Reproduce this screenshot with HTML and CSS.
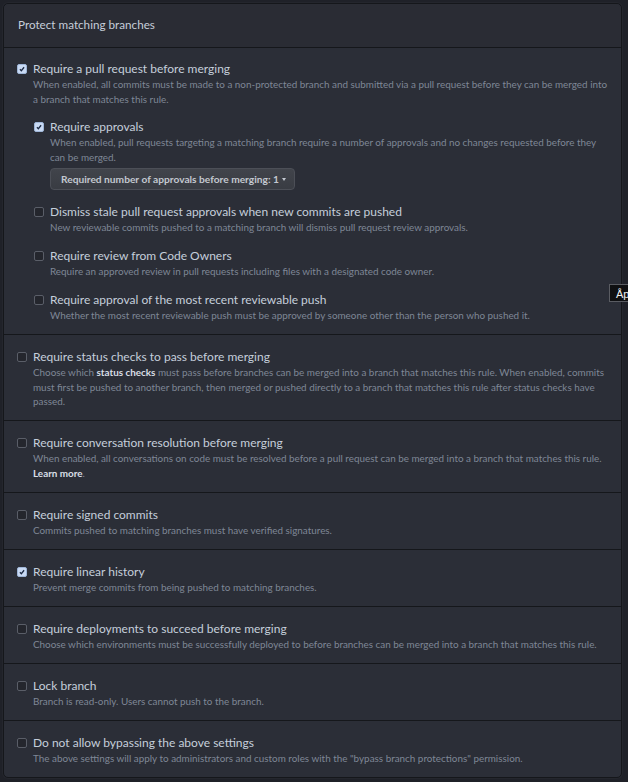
FILE: index.html
```html
<!DOCTYPE html>
<html lang="en">
<head>
<meta charset="utf-8">
<title>Protect matching branches</title>
<link rel="stylesheet" href="styles.css">
</head>
<body>
<div class="box">
  <div class="box-header">Protect matching branches</div>

  <div class="section section-first">
    <div class="opt">
      <span class="cb checked"><svg viewBox="0 0 10 10"><path d="M2.4 5.3 L4.2 7.2 L7.6 2.8" /></svg></span>
      <div class="opt-body">
        <div class="opt-title">Require a pull request before merging</div>
        <div class="opt-desc">When enabled, all commits must be made to a non-protected branch and submitted via a pull request before they can be merged into a branch that matches this rule.</div>

        <div class="sub">
          <div class="opt">
            <span class="cb checked"><svg viewBox="0 0 10 10"><path d="M2.4 5.3 L4.2 7.2 L7.6 2.8" /></svg></span>
            <div class="opt-body">
              <div class="opt-title">Require approvals</div>
              <div class="opt-desc">When enabled, pull requests targeting a matching branch require a number of approvals and no changes requested before they can be merged.</div>
              <button class="btn">Required number of approvals before merging: 1 <span class="caret"></span></button>
            </div>
          </div>
          <div class="opt">
            <span class="cb"></span>
            <div class="opt-body">
              <div class="opt-title">Dismiss stale pull request approvals when new commits are pushed</div>
              <div class="opt-desc">New reviewable commits pushed to a matching branch will dismiss pull request review approvals.</div>
            </div>
          </div>
          <div class="opt">
            <span class="cb"></span>
            <div class="opt-body">
              <div class="opt-title">Require review from Code Owners</div>
              <div class="opt-desc">Require an approved review in pull requests including files with a designated code owner.</div>
            </div>
          </div>
          <div class="opt">
            <span class="cb"></span>
            <div class="opt-body">
              <div class="opt-title">Require approval of the most recent reviewable push</div>
              <div class="opt-desc">Whether the most recent reviewable push must be approved by someone other than the person who pushed it.</div>
            </div>
          </div>
        </div>
      </div>
    </div>
  </div>

  <div class="section">
    <div class="opt">
      <span class="cb"></span>
      <div class="opt-body">
        <div class="opt-title">Require status checks to pass before merging</div>
        <div class="opt-desc">Choose which <strong>status checks</strong> must pass before branches can be merged into a branch that matches this rule. When enabled, commits must first be pushed to another branch, then merged or pushed directly to a branch that matches this rule after status checks have passed.</div>
      </div>
    </div>
  </div>

  <div class="section">
    <div class="opt">
      <span class="cb"></span>
      <div class="opt-body">
        <div class="opt-title">Require conversation resolution before merging</div>
        <div class="opt-desc">When enabled, all conversations on code must be resolved before a pull request can be merged into a branch that matches this rule. <a class="link">Learn more</a>.</div>
      </div>
    </div>
  </div>

  <div class="section">
    <div class="opt">
      <span class="cb"></span>
      <div class="opt-body">
        <div class="opt-title">Require signed commits</div>
        <div class="opt-desc">Commits pushed to matching branches must have verified signatures.</div>
      </div>
    </div>
  </div>

  <div class="section">
    <div class="opt">
      <span class="cb checked"><svg viewBox="0 0 10 10"><path d="M2.4 5.3 L4.2 7.2 L7.6 2.8" /></svg></span>
      <div class="opt-body">
        <div class="opt-title">Require linear history</div>
        <div class="opt-desc">Prevent merge commits from being pushed to matching branches.</div>
      </div>
    </div>
  </div>

  <div class="section">
    <div class="opt">
      <span class="cb"></span>
      <div class="opt-body">
        <div class="opt-title">Require deployments to succeed before merging</div>
        <div class="opt-desc">Choose which environments must be successfully deployed to before branches can be merged into a branch that matches this rule.</div>
      </div>
    </div>
  </div>

  <div class="section">
    <div class="opt">
      <span class="cb"></span>
      <div class="opt-body">
        <div class="opt-title">Lock branch</div>
        <div class="opt-desc">Branch is read-only. Users cannot push to the branch.</div>
      </div>
    </div>
  </div>

  <div class="section">
    <div class="opt">
      <span class="cb"></span>
      <div class="opt-body">
        <div class="opt-title">Do not allow bypassing the above settings</div>
        <div class="opt-desc">The above settings will apply to administrators and custom roles with the "bypass branch protections" permission.</div>
      </div>
    </div>
  </div>
</div>
<div class="tooltip">Åp</div>
</body>
</html>
```

FILE: styles.css
```css
html, body {
  margin: 0;
  padding: 0;
  background: #1f2128;
  overflow: hidden;
}
body {
  font-family: Lato, "Liberation Sans", sans-serif;
  color: #c5cdd8;
  padding: 3px 6px 4px 3px;
  position: relative;
}
.box {
  background: #2b2e37;
  border: 1px solid #15171b;
  border-radius: 5px;
  box-shadow: 0 0 0 1px #24262d;
}
.box-header {
  height: 43px;
  box-sizing: border-box;
  padding: 0 0 3px 14px;
  display: flex;
  align-items: center;
  font-size: 11.7px;
  color: #c6ceda;
  background: #2a2c34;
  border-radius: 5px 5px 0 0;
}
.section {
  border-top: 1px solid #15171b;
  padding: 13px 10px 11.5px 13px;
}
.section-first {
  padding-top: 12px;
  padding-bottom: 12px;
}
.opt {
  display: flex;
  gap: 6px;
  align-items: flex-start;
}
.cb {
  flex: none;
  width: 10px;
  height: 10px;
  margin-top: 4px;
  box-sizing: border-box;
  border: 1px solid #5a5e68;
  border-radius: 2px;
  background: #24262d;
  display: flex;
}
.cb.checked {
  background: #c9daf4;
  border-color: #9fb6d8;
}
.cb svg {
  width: 100%;
  height: 100%;
  fill: none;
  stroke: #1c2a44;
  stroke-width: 1.6;
}
.opt-body {
  flex: 1;
  min-width: 0;
}
.opt-title {
  font-size: 12px;
  line-height: 17px;
  color: #c5cedb;
}
.opt-desc {
  font-size: 9.9px;
  line-height: 14.5px;
  color: #7f8796;
}
.opt-desc strong {
  font-weight: 700;
  color: #d9dee6;
}
.link {
  color: #d9dee6;
  font-weight: 700;
}
.sub {
  display: flex;
  flex-direction: column;
  gap: 12.5px;
  margin-top: 12px;
  margin-left: 1px;
}
.btn {
  margin-top: 4px;
  height: 22px;
  padding: 0 8px 0 10px;
  font-family: Lato, "Liberation Sans", sans-serif;
  font-size: 10.2px;
  font-weight: 700;
  color: #c3c8d0;
  background: linear-gradient(#41444b, #393c43);
  border: 1px solid #4c4f57;
  border-radius: 4px;
  display: inline-flex;
  align-items: center;
  gap: 3px;
}
.caret {
  width: 0;
  height: 0;
  border-left: 2.5px solid transparent;
  border-right: 2.5px solid transparent;
  border-top: 3px solid #c3c8d0;
}
.tooltip {
  position: absolute;
  left: 609px;
  top: 284px;
  width: 40px;
  height: 18px;
  box-sizing: border-box;
  padding: 1px 0 0 6px;
  background: #0f1012;
  border: 1px solid #5a5c62;
  color: #f0f0f0;
  font-family: "Liberation Sans", sans-serif;
  font-size: 11px;
  line-height: 16px;
}
```
